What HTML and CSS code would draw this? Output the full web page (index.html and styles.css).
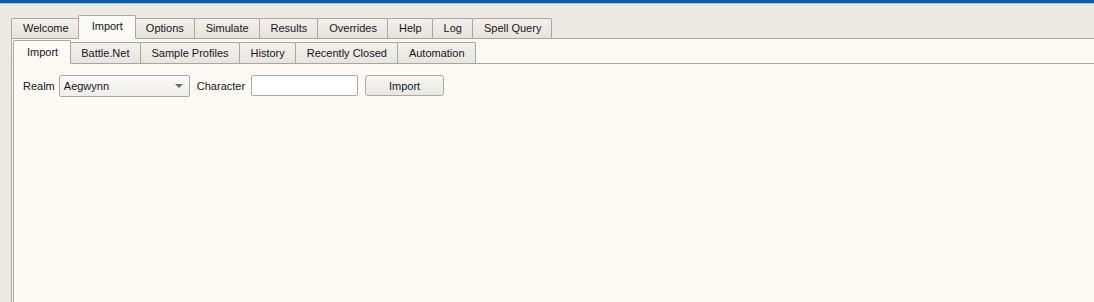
FILE: index.html
```html
<!DOCTYPE html>
<html lang="en">

<head>
    <meta charset="UTF-8">
    <title>SimulationCraft</title>
    <link rel="stylesheet" href="styles.css">
</head>

<body>
    <div class="titlebar"></div>

    <div class="main">
        <!-- main tabs -->
        <div class="tabbar">
            <div class="tab">Welcome</div>
            <div class="tab active">Import</div>
            <div class="tab">Options</div>
            <div class="tab">Simulate</div>
            <div class="tab">Results</div>
            <div class="tab">Overrides</div>
            <div class="tab">Help</div>
            <div class="tab">Log</div>
            <div class="tab">Spell Query</div>
        </div>

        <div class="pane">
            <!-- import sub tabs -->
            <div class="tabbar sub">
                <div class="tab active">Import</div>
                <div class="tab">Battle.Net</div>
                <div class="tab">Sample Profiles</div>
                <div class="tab">History</div>
                <div class="tab">Recently Closed</div>
                <div class="tab">Automation</div>
            </div>

            <div class="pane inner">
                <div class="import-row">
                    <span class="label">Realm</span>
                    <div class="combo">
                        <span>Aegwynn</span>
                        <span class="arrow"></span>
                    </div>
                    <span class="label char">Character</span>
                    <input type="text" class="field">
                    <button type="button" class="btn">Import</button>
                </div>
            </div>
        </div>
    </div>
</body>

</html>
```

FILE: styles.css
```css
* {
    box-sizing: border-box;
}

html,
body {
    height: 100%;
}

body {
    margin: 0;
    font-family: "Liberation Sans", Tahoma, sans-serif;
    font-size: 11px;
    color: #161616;
    background-color: #ece9e4;
    display: flex;
    flex-direction: column;
    overflow: hidden;
}

.titlebar {
    height: 4px;
    background-color: #0d5da9;
    border-bottom: 1px solid #9fc4e0;
}

.main {
    flex: 1;
    display: flex;
    flex-direction: column;
    padding: 11px 0 0 11px;
}

.tabbar {
    display: flex;
    align-items: flex-end;
    height: 24px;
    position: relative;
    z-index: 1;
    margin-bottom: -1px;
}

.tab {
    height: 21px;
    line-height: 19px;
    padding: 0 10px 0 11px;
    border: 1px solid #a9a7a2;
    border-bottom-color: #a8a6a1;
    border-radius: 2px 2px 0 0;
    background: linear-gradient(#f2f0ec, #e6e3de);
    margin-left: -1px;
    white-space: nowrap;
}

.tab:first-child {
    margin-left: 0;
}

.tab.active {
    height: 24px;
    line-height: 21px;
    background: #fcfaf7;
    border-bottom-color: #fcfaf7;
    padding: 0 12px 0 13px;
    margin-left: -2px;
    margin-right: -1px;
    position: relative;
}

.tab.active:first-child {
    margin-left: 0;
}

.pane {
    flex: 1;
    display: flex;
    flex-direction: column;
    border-top: 1px solid #a8a6a1;
    border-left: 1px solid #a8a6a1;
    background-color: #fdf9f5;
    padding: 1px 0 0 1px;
}

.sub .tab {
    height: 22px;
    line-height: 20px;
    background: linear-gradient(#f3f1ed, #e8e5e0);
}

.sub .tab.active {
    height: 24px;
    line-height: 22px;
    background: #fdf9f5;
    border-bottom-color: #fdf9f5;
}

.pane.inner {
    padding: 11px 0 0 9px;
}

.import-row {
    display: flex;
    align-items: center;
}

.combo {
    width: 131px;
    height: 22px;
    margin-left: 4px;
    border: 1px solid #a9a9a9;
    border-radius: 2px;
    background: linear-gradient(#fbfaf8, #f0eeea);
    display: flex;
    align-items: center;
    justify-content: space-between;
    padding: 0 6px 0 4px;
}

.arrow {
    width: 0;
    height: 0;
    border-left: 4px solid transparent;
    border-right: 4px solid transparent;
    border-top: 4px solid #6c6c6c;
}

.char {
    margin-left: 7px;
}

.field {
    width: 107px;
    height: 21px;
    margin: 0 0 1px 6px;
    border: 1px solid #a9a9a9;
    border-radius: 2px;
    background-color: #fff;
}

.btn {
    width: 79px;
    height: 21px;
    margin: 0 0 1px 7px;
    border: 1px solid #acaaa6;
    border-radius: 3px;
    background: linear-gradient(#f7f6f3, #e9e7e2);
    font-family: inherit;
    font-size: 11px;
    color: #161616;
}
```
